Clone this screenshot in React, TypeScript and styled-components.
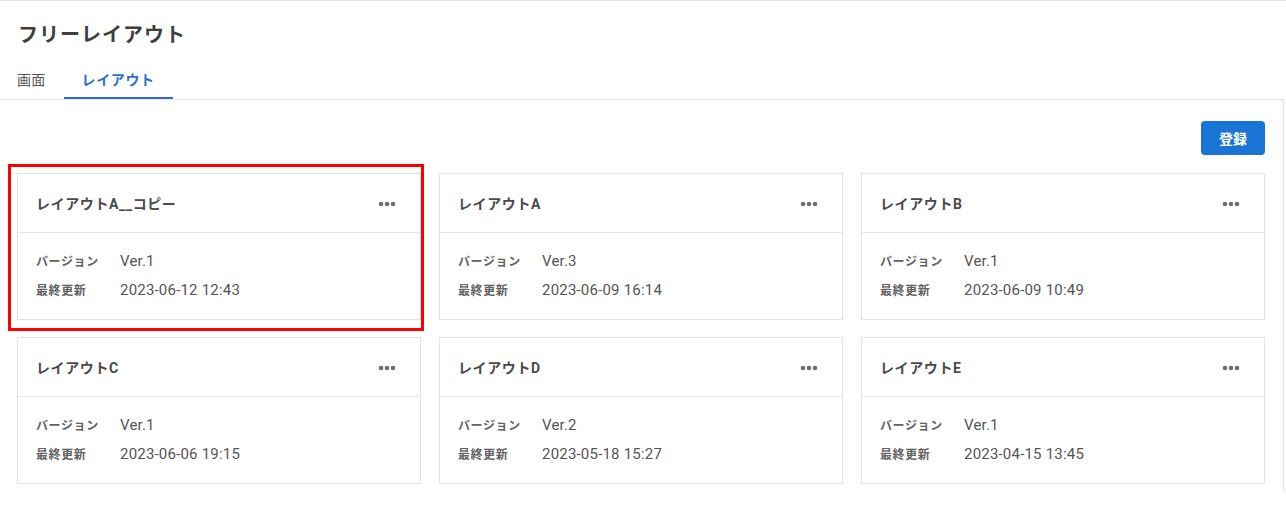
import styled, { createGlobalStyle } from "styled-components";

const GlobalStyle = createGlobalStyle`
  html, body {
    margin: 0;
    padding: 0;
    background: #ffffff;
  }
  body {
    font-family: Roboto, "Noto Sans CJK JP", sans-serif;
    color: #444444;
  }
`;

type Layout = {
  name: string;
  version: string;
  updated: string;
};

const layouts: Layout[] = [
  { name: "レイアウトA__コピー", version: "Ver.1", updated: "2023-06-12 12:43" },
  { name: "レイアウトA", version: "Ver.3", updated: "2023-06-09 16:14" },
  { name: "レイアウトB", version: "Ver.1", updated: "2023-06-09 10:49" },
  { name: "レイアウトC", version: "Ver.1", updated: "2023-06-06 19:15" },
  { name: "レイアウトD", version: "Ver.2", updated: "2023-05-18 15:27" },
  { name: "レイアウトE", version: "Ver.1", updated: "2023-04-15 13:45" },
];

function App() {
  return (
    <>
      <GlobalStyle />
      <Page>
        <Header>
          <Title>フリーレイアウト</Title>
          <TabBar>
            <Tab>画面</Tab>
            <Tab $active>レイアウト</Tab>
          </TabBar>
        </Header>
        <Panel>
          <Toolbar>
            <PrimaryButton>登録</PrimaryButton>
          </Toolbar>
          <CardGrid>
            {layouts.map((item, i) => (
              <Card key={item.name} $highlighted={i === 0}>
                <CardHeader>
                  <CardTitle>{item.name}</CardTitle>
                  <MoreButton aria-label="menu">
                    <svg width="18" height="6" viewBox="0 0 18 6">
                      <circle cx="3" cy="3" r="2.3" fill="#6f6f6f" />
                      <circle cx="9" cy="3" r="2.3" fill="#6f6f6f" />
                      <circle cx="15" cy="3" r="2.3" fill="#6f6f6f" />
                    </svg>
                  </MoreButton>
                </CardHeader>
                <CardBody>
                  <InfoRow>
                    <InfoLabel>バージョン</InfoLabel>
                    <InfoValue>{item.version}</InfoValue>
                  </InfoRow>
                  <InfoRow>
                    <InfoLabel>最終更新</InfoLabel>
                    <InfoValue>{item.updated}</InfoValue>
                  </InfoRow>
                </CardBody>
              </Card>
            ))}
          </CardGrid>
        </Panel>
      </Page>
    </>
  );
}

const Page = styled.div`
  width: 1286px;
  min-height: 528px;
  border-top: 1px solid #e6e6e9;
  box-sizing: border-box;
`;

const Header = styled.div`
  display: flex;
  flex-direction: column;
`;

const Title = styled.h1`
  margin: 0;
  padding: 19px 0 0 18px;
  height: 28px;
  font-family: "Noto Sans CJK JP", sans-serif;
  font-size: 20px;
  line-height: 28px;
  font-weight: 700;
  letter-spacing: 1px;
  color: #3e3e3e;
`;

const TabBar = styled.div`
  display: flex;
  margin-top: 17px;
`;

const Tab = styled.div<{ $active?: boolean }>`
  padding: 0 18px;
  height: 34px;
  line-height: 28px;
  box-sizing: border-box;
  font-family: "Noto Sans CJK JP", sans-serif;
  font-size: 14px;
  font-weight: ${(p) => (p.$active ? 700 : 400)};
  letter-spacing: ${(p) => (p.$active ? "0.6px" : "0.3px")};
  color: ${(p) => (p.$active ? "#2a6fcf" : "#555555")};
  border-bottom: 2px solid ${(p) => (p.$active ? "#2a6fcf" : "transparent")};
  &:first-child {
    padding-left: 17px;
  }
`;

const Panel = styled.div`
  width: 1284px;
  border-top: 1px solid #e6e6e9;
  border-right: 1px solid #e6e6e9;
  box-sizing: border-box;
  padding: 21px 18px 7px 17px;
`;

const Toolbar = styled.div`
  display: flex;
  justify-content: flex-end;
  margin-bottom: 18px;
`;

const PrimaryButton = styled.button`
  width: 64px;
  height: 34px;
  border: none;
  border-radius: 4px;
  background: #1a74d6;
  color: #ffffff;
  font-family: "Noto Sans CJK JP", sans-serif;
  font-size: 14px;
  font-weight: 700;
  cursor: pointer;
`;

const CardGrid = styled.div`
  display: grid;
  grid-template-columns: repeat(3, 1fr);
  gap: 17px 18px;
`;

const Card = styled.div<{ $highlighted?: boolean }>`
  position: relative;
  border: 1px solid #e3e3e6;
  background: #ffffff;
  &::after {
    content: "";
    display: ${(p) => (p.$highlighted ? "block" : "none")};
    position: absolute;
    left: -10px;
    top: -10px;
    right: -4px;
    bottom: -12px;
    border: 3px solid #ff0000;
    pointer-events: none;
  }
`;

const CardHeader = styled.div`
  display: flex;
  align-items: center;
  justify-content: space-between;
  height: 58px;
  padding: 0 24px 0 18px;
  border-bottom: 1px solid #e8e8eb;
`;

const CardTitle = styled.div`
  font-family: Roboto, "Noto Sans CJK JP", sans-serif;
  font-size: 14px;
  font-weight: 700;
  letter-spacing: 0.6px;
  color: #4a4a4a;
`;

const MoreButton = styled.div`
  display: flex;
  align-items: center;
  padding-top: 1px;
`;

const CardBody = styled.div`
  padding: 13px 18px 15px 18px;
`;

const InfoRow = styled.div`
  display: flex;
  align-items: center;
  height: 29px;
`;

const InfoLabel = styled.div`
  width: 84px;
  font-family: "Noto Sans CJK JP", sans-serif;
  font-size: 12px;
  font-weight: 700;
  letter-spacing: 0.6px;
  color: #626262;
`;

const InfoValue = styled.div`
  font-family: Roboto, "Noto Sans CJK JP", sans-serif;
  font-size: 15px;
  letter-spacing: 0.2px;
  color: #555555;
`;

export default App;
